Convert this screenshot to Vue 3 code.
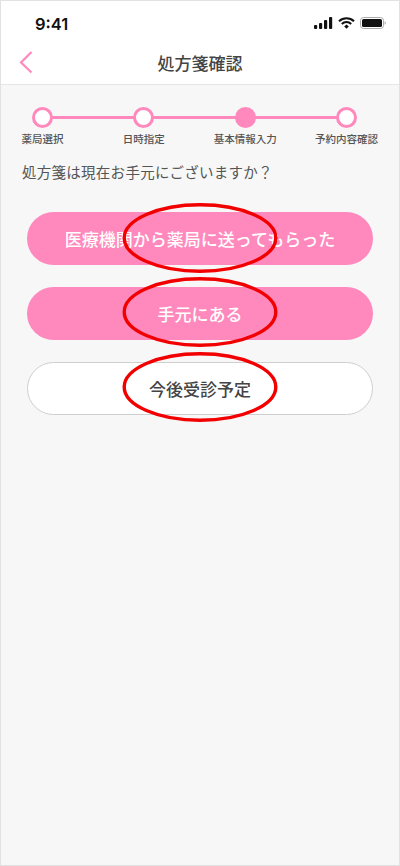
<script setup>
const steps = [
  { label: '薬局選択', active: false },
  { label: '日時指定', active: false },
  { label: '基本情報入力', active: true },
  { label: '予約内容確認', active: false },
]
const options = [
  { label: '医療機関から薬局に送ってもらった', primary: true },
  { label: '手元にある', primary: true },
  { label: '今後受診予定', primary: false },
]
</script>

<template>
  <div class="frame">
    <div class="top">
      <div class="status">
        <span class="time">9:41</span>
        <div class="status-icons">
          <svg width="19" height="12" viewBox="0 0 19 12">
            <rect x="0" y="8" width="3.2" height="4" rx="1" fill="#111" />
            <rect x="5" y="6" width="3.2" height="6" rx="1" fill="#111" />
            <rect x="10" y="3" width="3.2" height="9" rx="1" fill="#111" />
            <rect x="15" y="0" width="3.2" height="12" rx="1" fill="#111" />
          </svg>
          <svg width="17" height="12" viewBox="0 0 17 12">
            <path d="M1 4.2a10.8 10.8 0 0 1 15 0" fill="none" stroke="#111" stroke-width="2" />
            <path d="M3.8 7a6.8 6.8 0 0 1 9.4 0" fill="none" stroke="#111" stroke-width="2" />
            <path d="M6.2 9.4l2.3-2 2.3 2-2.3 2.4z" fill="#111" />
          </svg>
          <svg width="26" height="12" viewBox="0 0 26 12">
            <rect x="0.5" y="0.5" width="23" height="11" rx="3" fill="none" stroke="#aaa" />
            <rect x="2" y="2" width="20" height="8" rx="1.6" fill="#111" />
            <path d="M24.6 4.2c.8.3 1.2 1 1.2 1.8s-.4 1.5-1.2 1.8z" fill="#aaa" />
          </svg>
        </div>
      </div>
      <header class="nav">
        <svg class="back" width="14" height="24" viewBox="0 0 14 24">
          <path d="M12.5 2L2 12.5 12.5 22.5" fill="none" stroke="#ff89bd" stroke-width="2.2" />
        </svg>
        <h1 class="title">処方箋確認</h1>
      </header>
    </div>

    <main class="body">
      <div class="stepper">
        <div class="line"></div>
        <div v-for="s in steps" :key="s.label" class="step">
          <span class="dot" :class="{ on: s.active }"></span>
          <span class="step-label">{{ s.label }}</span>
        </div>
      </div>
      <p class="question">処方箋は現在お手元にございますか？</p>
      <div class="options">
        <button
          v-for="o in options"
          :key="o.label"
          class="option"
          :class="o.primary ? 'primary' : 'plain'"
        >
          {{ o.label }}
          <svg class="mark" width="160" height="72" viewBox="0 0 160 72">
            <ellipse cx="80" cy="36" rx="75.8" ry="33.3" fill="none" stroke="#f20000" stroke-width="3.4" />
          </svg>
        </button>
      </div>
    </main>
  </div>
</template>

<style>
html, body { margin: 0; padding: 0; background: #fff; }
</style>

<style scoped>
.frame {
  width: 400px;
  height: 866px;
  box-sizing: border-box;
  border: 1px solid #e2e2e2;
  background: #f7f7f7;
  display: flex;
  flex-direction: column;
  font-family: "Noto Sans CJK JP", "Noto Sans", sans-serif;
  overflow: hidden;
}
.top {
  background: #fff;
  border-bottom: 1px solid #e6e6e6;
  height: 83px;
  flex: none;
}
.status {
  height: 44px;
  padding: 0 14px 0 34px;
  display: flex;
  align-items: center;
  justify-content: space-between;
  box-sizing: border-box;
}
.time {
  font-family: Inter, "Liberation Sans", sans-serif;
  font-size: 16.5px;
  font-weight: 600;
  color: #111;
  position: relative;
  top: 1px;
}
.status-icons {
  display: flex;
  align-items: center;
  gap: 5px;
  position: relative;
  left: 1px;
}
.nav {
  height: 39px;
  position: relative;
  display: flex;
  align-items: center;
  justify-content: center;
}
.back {
  position: absolute;
  left: 18px;
  top: 5px;
}
.title {
  margin: 0;
  font-size: 17px;
  font-weight: 500;
  color: #444;
  line-height: 1;
  position: relative;
  top: -2px;
}
.body {
  flex: 1;
  display: flex;
  flex-direction: column;
}
.stepper {
  position: relative;
  display: flex;
  justify-content: space-between;
  padding: 21.5px 42px 0 31px;
}
.line {
  position: absolute;
  left: 41px;
  right: 52px;
  top: 31px;
  height: 3px;
  background: #ff89bd;
}
.step {
  position: relative;
  width: 21px;
  display: flex;
  flex-direction: column;
  align-items: center;
  gap: 4px;
}
.dot {
  flex: none;
  width: 21px;
  height: 21px;
  box-sizing: border-box;
  border-radius: 50%;
  border: 3px solid #ff89bd;
  background: #fff;
}
.dot.on { background: #ff89bd; }
.step-label {
  font-size: 10.5px;
  font-weight: 500;
  color: #555;
  white-space: nowrap;
  line-height: 14px;
}
.question {
  margin: 15.5px 0 0 21px;
  font-size: 14.5px;
  line-height: 22px;
  color: #555;
  letter-spacing: 0.27px;
}
.options {
  display: flex;
  flex-direction: column;
  gap: 22px;
  padding: 29px 26px 0;
}
.option {
  position: relative;
  height: 53px;
  border-radius: 27px;
  box-sizing: border-box;
  font-family: inherit;
  font-size: 17px;
  font-weight: 500;
  padding: 0;
}
.primary {
  background: #ff89bd;
  border: none;
  color: #fff;
}
.plain {
  background: #fff;
  border: 1px solid #cfcfcf;
  color: #444;
}
.mark {
  position: absolute;
  left: 50%;
  top: 50%;
  transform: translate(-50%, -50%);
  pointer-events: none;
  margin-top: -0.5px;
}
.option:nth-child(2) .mark { margin-top: -1.5px; }
.option:nth-child(3) .mark { margin-top: -2px; }
</style>
